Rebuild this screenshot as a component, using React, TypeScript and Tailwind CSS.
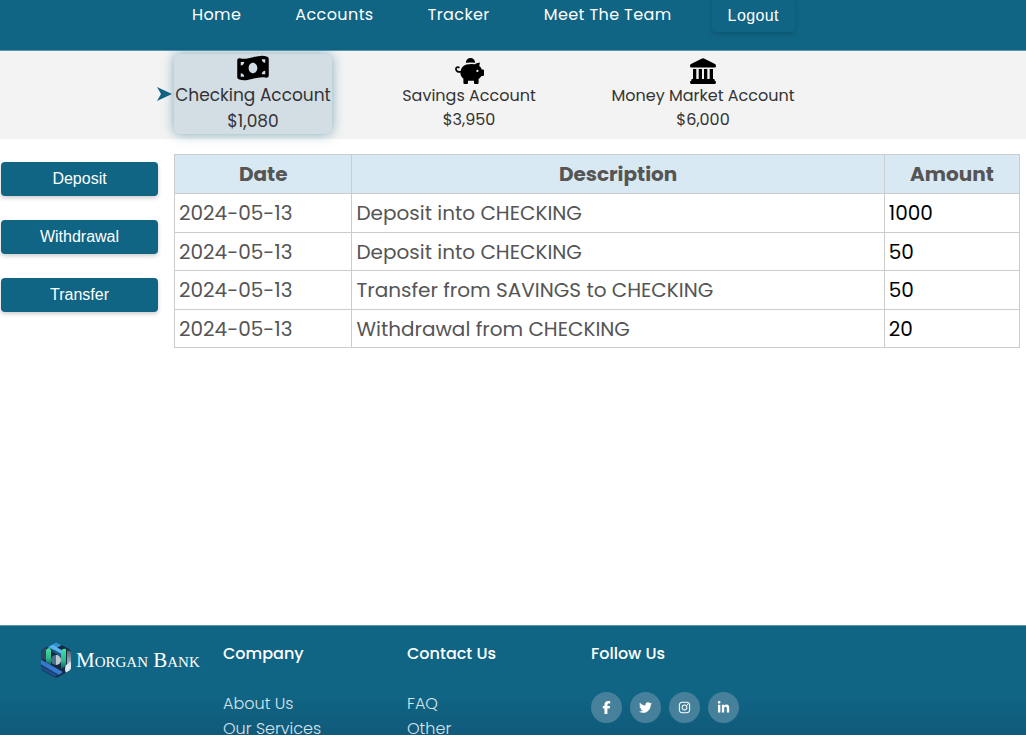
import { FaMoneyBillWave, FaFacebookF, FaTwitter, FaInstagram, FaLinkedinIn } from "react-icons/fa6";

const navItems = ["Home", "Accounts", "Tracker", "Meet The Team"];

const rows = [
  { description: "Deposit into CHECKING", amount: "1000" },
  { description: "Deposit into CHECKING", amount: "50" },
  { description: "Transfer from SAVINGS to CHECKING", amount: "50" },
  { description: "Withdrawal from CHECKING", amount: "20" },
];

const socials = [
  { label: "Facebook", Icon: FaFacebookF },
  { label: "Twitter", Icon: FaTwitter },
  { label: "Instagram", Icon: FaInstagram },
  { label: "LinkedIn", Icon: FaLinkedinIn },
];

function LogoMark() {
  return (
    <svg viewBox="0 0 32 36" className="h-9 w-8 shrink-0" aria-hidden="true">
      <defs>
        <linearGradient id="leaf" x1="0" y1="0" x2="0" y2="1">
          <stop offset="0" stopColor="#43e0a5" />
          <stop offset="0.6" stopColor="#2bb78b" />
          <stop offset="1" stopColor="#0c5a60" />
        </linearGradient>
        <linearGradient id="steel" x1="0" y1="0" x2="0" y2="1">
          <stop offset="0" stopColor="#46606f" />
          <stop offset="1" stopColor="#a9bac5" />
        </linearGradient>
        <clipPath id="hex">
          <path d="M16 0 29 7Q31 8 31 11V26Q31 28 29 29L18 35Q16 36 14 35L3 29Q1 28 1 26V11Q1 8 3 7Z" />
        </clipPath>
      </defs>
      <g clipPath="url(#hex)">
        <path d="M0 0H32V36H0Z" fill="#14283f" />
        <path d="M1 8 6 5V18L1 17Z" fill="#29475e" />
        <path d="M7 5 16 0 22 3 13 8Z" fill="#2f92cf" />
        <path d="M9 5 13 3 25 10 21 12Z" fill="#5cb4e8" />
        <path d="M11 9 14 8 21 12V15Z" fill="#1c568d" />
        <path d="M27 8 32 10V21L27 22Z" fill="url(#steel)" />
        <circle cx="16" cy="18" r="5" fill="#4b7188" />
        <path d="M16 13A5 5 0 0 1 16 23Z" fill="#b9c9d4" />
        <path d="M0 17 23 30 19 33 0 22Z" fill="#3479cf" />
        <path d="M0 23 18 33 15 35 0 27Z" fill="#1f4b86" />
        <path d="M6 8Q9 4 11 8V23L6 20Z" fill="url(#leaf)" />
        <path d="M21 10Q22 6 26 7V24L21 27Z" fill="url(#leaf)" />
        <path d="M26 23 32 19V27L26 31Q24 27 26 23Z" fill="#dce9f0" />
      </g>
    </svg>
  );
}

function PiggyIcon() {
  return (
    <svg viewBox="0 0 29 26" className="h-[26px] w-[29px] shrink-0" aria-hidden="true">
      <path d="M10.8 4.8C11 2 13 0 15.5 0S20 2 20.2 4.8Q15.5 4.2 10.8 4.8Z" />
      <path d="M3.8 9.4C1.8 8.5.6 10 1.1 11.7 1.6 13.4 4 14.3 7 13.7" fill="none" stroke="black" strokeWidth="1.7" strokeLinecap="round" />
      <path fillRule="evenodd" d="M11.5 6.4Q15.5 5.6 20 6.2C21.4 5.2 23 4.8 25 4.8L24.2 8C25.6 9 26.3 10.2 26.8 11.4H28Q29 11.4 29 12.5V17Q29 18 28 18H26.5Q25.6 19.7 23.6 21V25Q23.6 26 22.6 26H20Q19 26 19 25V22.8H13V25Q13 26 12 26H9.5Q8.4 26 8.4 25V20.8C5.8 18.8 5 16 5.5 13.3 6 9.8 8.2 7.4 11.5 6.4ZM21.3 12.9A1.1 1.1 0 1 0 23.5 12.9 1.1 1.1 0 1 0 21.3 12.9Z" />
    </svg>
  );
}

function BankIcon() {
  return (
    <svg viewBox="0 0 26 26" className="h-[26px] w-[26px] shrink-0" aria-hidden="true">
      <path d="M12 .4Q13 0 14 .4L25 6Q26 6.6 26 8 26 9.6 24.6 9.6H1.4Q0 9.6 0 8 0 6.6 1 6ZM3 11H6.3V21H8.7V11H12V21H14V11H17.3V21H19.7V11H23V21H24Q24.6 21 24.6 22.4Q26 23 26 24.3Q26 26 24.7 26H1.3Q0 26 0 24.3Q0 23 1.4 22.4Q1.4 21 2 21H3Z" />
    </svg>
  );
}

export default function App() {
  return (
    <div className="flex h-screen flex-col overflow-hidden bg-white font-['Poppins','Inter',sans-serif] text-[#333]">
      <header className="h-[51px] shrink-0 border-b border-[#5a96af] bg-[#106484] text-white">
        <nav className="ml-[192px] flex items-start text-base leading-[30px] tracking-wide">
          <div className="flex gap-[54px]">
            {navItems.map((item) => (
              <a key={item} href="#" className="whitespace-nowrap">{item}</a>
            ))}
          </div>
          <button className="ml-10 h-8 rounded-b px-4 font-['Liberation_Sans',sans-serif] leading-[30px] tracking-wide shadow-[0_2px_4px_rgba(0,0,0,0.15)]">Logout</button>
        </nav>
      </header>

      <section className="flex h-[88px] shrink-0 bg-[#f3f3f3] pl-[157px] text-black">
        <svg viewBox="0 0 16 14" className="mt-9 h-[14px] w-4 shrink-0" aria-hidden="true">
          <path d="M0 0 15 7 0 14 4 7Z" fill="#106484" />
        </svg>
        <button className="mt-[3px] ml-px flex h-20 w-[158px] flex-col items-center rounded-md bg-[#d2dde4] text-[17px] leading-[26px] shadow-[0_0_12px_rgba(16,100,132,0.5)]">
          <FaMoneyBillWave className="h-7 w-8 shrink-0" />
          <span className="whitespace-nowrap text-[#333]">Checking Account</span>
          <span className="text-[#333]">$1,080</span>
        </button>
        <button className="ml-[71px] flex w-[132px] flex-col items-center pt-[7px] leading-6">
          <PiggyIcon />
          <span className="whitespace-nowrap text-[#333]">Savings Account</span>
          <span className="text-[#333]">$3,950</span>
        </button>
        <button className="ml-[78px] flex w-[180px] flex-col items-center pt-[7px] leading-6">
          <BankIcon />
          <span className="whitespace-nowrap text-[#333]">Money Market Account</span>
          <span className="text-[#333]">$6,000</span>
        </button>
      </section>

      <main className="flex min-h-0 flex-1 items-start gap-4 pr-1.5 pl-px pt-[15px]">
        <div className="mt-2 flex w-[157px] shrink-0 flex-col gap-6 font-['Liberation_Sans',sans-serif]">
          {["Deposit", "Withdrawal", "Transfer"].map((action) => (
            <button key={action} className="h-[34px] rounded bg-[#106484] text-base text-white shadow-[0_2px_4px_rgba(0,0,0,0.2)]">{action}</button>
          ))}
        </div>
        <table className="min-w-0 flex-1 table-fixed border-collapse text-xl leading-[30px] text-[#555]">
          <thead className="bg-[#d9e9f3]">
            <tr className="h-[39px]">
              <th className="w-[21%] border border-[#ccc]">Date</th>
              <th className="border border-[#ccc]">Description</th>
              <th className="w-[16%] border border-[#ccc]">Amount</th>
            </tr>
          </thead>
          <tbody>
            {rows.map((row, index) => (
              <tr key={index} className="h-[38px] odd:h-[39px]">
                <td className="border border-[#ccc] px-1">2024-05-13</td>
                <td className="border border-[#ccc] px-1">{row.description}</td>
                <td className="border border-[#ccc] px-1 text-black">{row.amount}</td>
              </tr>
            ))}
          </tbody>
        </table>
      </main>

      <footer className="flex h-[110px] shrink-0 overflow-hidden border-t border-[#5a96af] bg-linear-to-b from-[#106484] from-65% to-[#105a7a] pl-10 text-white">
        <div className="mt-4 flex h-9 w-[183px] items-center gap-1">
          <LogoMark />
          <span className="whitespace-nowrap font-['Liberation_Serif',serif] text-[21px] leading-6 [font-variant:small-caps]">Morgan Bank</span>
        </div>
        <div className="w-[184px] pt-4">
          <h2 className="text-base leading-6 font-medium">Company</h2>
          <ul className="mt-[25px] font-light leading-[25px] text-[#d8e5eb]">
            <li><a href="#">About Us</a></li>
            <li><a href="#">Our Services</a></li>
          </ul>
        </div>
        <div className="w-[184px] pt-4">
          <h2 className="text-base leading-6 font-medium">Contact Us</h2>
          <ul className="mt-[25px] font-light leading-[25px] text-[#d8e5eb]">
            <li><a href="#">FAQ</a></li>
            <li><a href="#">Other</a></li>
          </ul>
        </div>
        <div className="pt-4">
          <h2 className="text-base leading-6 font-medium">Follow Us</h2>
          <div className="mt-[26px] flex gap-2">
            {socials.map(({ label, Icon }) => (
              <a key={label} href="#" aria-label={label} className="flex size-[31px] items-center justify-center rounded-full bg-[#47809b]">
                <Icon className="size-[13px]" />
              </a>
            ))}
          </div>
        </div>
      </footer>
    </div>
  );
}
